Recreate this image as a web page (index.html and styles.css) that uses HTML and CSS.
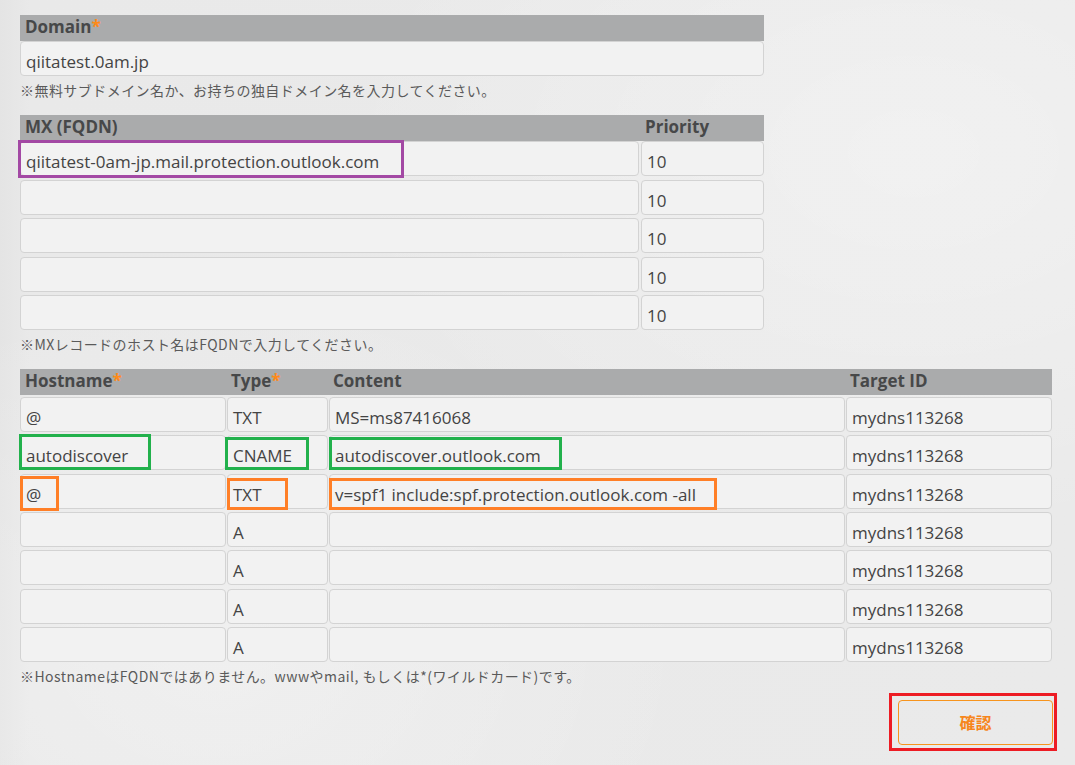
FILE: index.html
```html
<!DOCTYPE html>
<html lang="ja">
<head>
<meta charset="utf-8">
<title>DNS</title>
<link rel="stylesheet" href="styles.css">
</head>
<body>
<div class="page">
  <section class="block narrow">
    <div class="thead one"><span>Domain<em>*</em></span></div>
    <div class="field">qiitatest.0am.jp</div>
    <p class="note">※無料サブドメイン名か、お持ちの独自ドメイン名を入力してください。</p>
  </section>

  <section class="block narrow">
    <div class="grid mx head">
      <div class="thead"><span>MX (FQDN)</span></div>
      <div class="thead"><span>Priority</span></div>
    </div>
    <div class="grid mx body">
      <div class="field cell">qiitatest-0am-jp.mail.protection.outlook.com<i class="mark purple m-mx"></i></div>
      <div class="field">10</div>
      <div class="field"></div><div class="field">10</div>
      <div class="field"></div><div class="field">10</div>
      <div class="field"></div><div class="field">10</div>
      <div class="field"></div><div class="field">10</div>
    </div>
    <p class="note">※MXレコードのホスト名はFQDNで入力してください。</p>
  </section>

  <section class="block">
    <div class="grid rec head">
      <div class="thead"><span>Hostname<em>*</em></span></div>
      <div class="thead"><span>Type<em>*</em></span></div>
      <div class="thead"><span>Content</span></div>
      <div class="thead"><span>Target ID</span></div>
    </div>
    <div class="grid rec body">
      <div class="field">@</div><div class="field">TXT</div><div class="field">MS=ms87416068</div><div class="field">mydns113268</div>

      <div class="field cell">autodiscover<i class="mark green m-host"></i></div>
      <div class="field cell">CNAME<i class="mark green m-type"></i></div>
      <div class="field cell">autodiscover.outlook.com<i class="mark green m-cont"></i></div>
      <div class="field">mydns113268</div>

      <div class="field cell">@<i class="mark orange m-at"></i></div>
      <div class="field cell">TXT<i class="mark orange m-txt"></i></div>
      <div class="field cell">v=spf1 include:spf.protection.outlook.com -all<i class="mark orange m-spf"></i></div>
      <div class="field">mydns113268</div>

      <div class="field"></div><div class="field">A</div><div class="field"></div><div class="field">mydns113268</div>
      <div class="field"></div><div class="field">A</div><div class="field"></div><div class="field">mydns113268</div>
      <div class="field"></div><div class="field">A</div><div class="field"></div><div class="field">mydns113268</div>
      <div class="field"></div><div class="field">A</div><div class="field"></div><div class="field">mydns113268</div>
    </div>
    <p class="note">※HostnameはFQDNではありません。wwwやmail, もしくは*(ワイルドカード)です。</p>
  </section>

  <div class="actions">
    <div class="btnwrap">
      <button class="btn" type="button">確認</button>
      <i class="mark red m-btn"></i>
    </div>
  </div>
</div>
</body>
</html>
```

FILE: styles.css
```css
html, body {
  margin: 0;
  padding: 0;
}
body {
  background: #e9e9e9;
  background-image:
    radial-gradient(ellipse at 85% 20%, rgba(255,255,255,0.35), rgba(255,255,255,0) 45%),
    radial-gradient(ellipse at 20% 85%, rgba(255,255,255,0.3), rgba(255,255,255,0) 40%),
    linear-gradient(90deg, #e4e4e4 0px, #e9e9e9 30px, #eaeaea 100%);
  min-height: 765px;
  font-family: "Open Sans", "Noto Sans CJK JP", sans-serif;
  color: #444;
}
.page {
  width: 1032px;
  padding: 15px 0 0 20px;
}
.block {
  margin-bottom: 15px;
}
.narrow {
  width: 744px;
}
.thead {
  height: 26px;
  background: #aaabac;
  box-sizing: border-box;
  padding-left: 5px;
  font-family: "Open Sans", sans-serif;
  font-weight: 700;
  font-size: 17px;
  color: #474849;
  line-height: 24px;
  white-space: nowrap;
}
.thead em {
  font-style: normal;
  color: #ff8a18;
}
.grid {
  display: grid;
  column-gap: 2px;
}
.head .thead:not(:first-child) {
  margin-left: -2px;
  padding-left: 6px;
}
.mx {
  grid-template-columns: 619px 123px;
}
.mx.body {
  grid-auto-rows: 35px;
  row-gap: 3.5px;
}
.rec {
  grid-template-columns: 206px 101px 516px 206px;
  column-gap: 1px;
}
.rec.body {
  margin-top: 2px;
  grid-auto-rows: 35px;
  row-gap: 3.33px;
}
.rec.head .thead:not(:first-child) {
  margin-left: -1px;
  padding-left: 5px;
}
.field {
  height: 35px;
  box-sizing: border-box;
  background: #f2f2f2;
  border: 1px solid #d3d3d3;
  border-radius: 4px;
  padding: 10px 0 0 5px;
  font-size: 17px;
  line-height: 20px;
  color: #444;
  white-space: nowrap;
}
.cell {
  position: relative;
}
.note {
  margin: 4px 0 0 0;
  font-family: "Noto Sans CJK JP", sans-serif;
  font-size: 14px;
  letter-spacing: 0.45px;
  line-height: 20px;
  color: #5a5a5a;
}
.actions {
  display: flex;
  justify-content: flex-end;
  margin-top: -1px;
}
.btnwrap {
  position: relative;
  margin-right: -1px;
}
.btn {
  display: block;
  width: 155px;
  height: 45px;
  background: transparent;
  border: 1px solid #f7941d;
  border-radius: 4px;
  color: #f7861c;
  font-family: "Noto Sans CJK JP", sans-serif;
  font-size: 16px;
  font-weight: 700;
  cursor: pointer;
}
.mark {
  position: absolute;
  box-sizing: border-box;
  border: 3px solid;
  pointer-events: none;
}
.purple { border-color: #a349a4; }
.green { border-color: #22b14c; }
.orange { border-color: #ff7f27; }
.red { border-color: #ed1c24; }
.m-mx { left: -3px; top: -2px; width: 386px; height: 38px; }
.m-host { left: -2px; top: -2px; width: 132px; height: 36px; }
.m-type { left: -3px; top: 1px; width: 84px; height: 33px; }
.m-cont { left: -1px; top: 1px; width: 233px; height: 33px; }
.m-at { left: -1px; top: 1px; width: 39px; height: 35px; }
.m-txt { left: -1px; top: 3px; width: 61px; height: 32px; }
.m-spf { left: -1px; top: 3px; width: 388px; height: 32px; }
.m-btn { left: -9px; top: -7px; width: 168px; height: 58px; }
```
